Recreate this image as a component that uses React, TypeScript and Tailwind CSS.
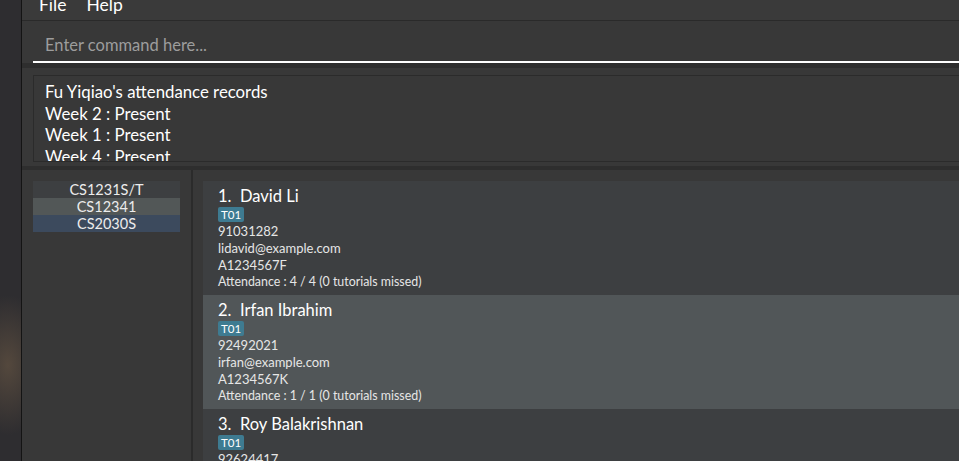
const modules = [
  { code: 'CS1231S/T', bg: 'bg-[#3d3f41]' },
  { code: 'CS12341', bg: 'bg-[#525757]' },
  { code: 'CS2030S', bg: 'bg-[#3c4a5d]' },
];

const people = [
  {
    name: 'David Li',
    phone: '91031282',
    email: 'lidavid@example.com',
    id: 'A1234567F',
    attendance: '4 / 4 (0 tutorials missed)',
  },
  {
    name: 'Irfan Ibrahim',
    phone: '92492021',
    email: 'irfan@example.com',
    id: 'A1234567K',
    attendance: '1 / 1 (0 tutorials missed)',
  },
  {
    name: 'Roy Balakrishnan',
    phone: '92624417',
    email: 'royb@example.com',
    id: 'A1234567R',
    attendance: '2 / 2 (0 tutorials missed)',
  },
];

function PersonCard({ index, person }: { index: number; person: (typeof people)[number] }) {
  const bg = index % 2 === 0 ? 'bg-[#3d3f41]' : 'bg-[#515658]';
  return (
    <div className={`${bg} h-[114px] shrink-0 pl-[15px] pt-[5px]`}>
      <div className="text-[16.5px] leading-[20px] text-white">
        {index + 1}.&nbsp;&nbsp;{person.name}
      </div>
      <div className="mt-[1px] flex">
        <span className="rounded-[2px] bg-[#3e7b91] px-[3px] text-[11.5px] leading-[15px] text-white">
          T01
        </span>
      </div>
      <div className="mt-[1px] text-[13px] leading-[17px] text-[#e6e6e6]">{person.phone}</div>
      <div className="text-[13px] leading-[17px] text-[#e6e6e6]">{person.email}</div>
      <div className="text-[13px] leading-[17px] text-[#e6e6e6]">{person.id}</div>
      <div className="text-[12.4px] leading-[16px] text-[#e6e6e6]">Attendance : {person.attendance}</div>
    </div>
  );
}

export default function App() {
  return (
    <div className="flex h-[461px] w-[959px] overflow-hidden font-['Lato',sans-serif]">
      <div className="w-[21px] shrink-0 bg-[#2e2d30] bg-[radial-gradient(ellipse_40px_70px_at_8px_365px,#54483d,#2e2d30)]" />
      <div className="w-[1px] shrink-0 bg-[#141414]" />
      <div className="flex min-w-0 flex-1 flex-col bg-[#383838]">
        <div className="flex h-[21px] shrink-0 items-end gap-[20px] border-b border-[#2a2a2a] bg-[#3a3a3a] pb-[7px] pl-[17px] text-[17.5px] leading-[16px] text-white">
          <span>File</span>
          <span>Help</span>
        </div>
        <div className="flex h-[42px] shrink-0 flex-col justify-end pl-[11px]">
          <div className="border-b-2 border-white pb-[6px] pl-[12px] text-[16.5px] leading-[20px] text-[#9d9d9d]">
            Enter command here...
          </div>
        </div>
        <div className="h-[5px] shrink-0 bg-[#2e2e2e]" />
        <div className="flex h-[98px] shrink-0 flex-col pl-[11px] pt-[7px]">
          <div className="h-[87px] overflow-hidden border-y border-l border-[#2b2b2b] pl-[11px] pt-[5px] text-[16.8px] leading-[21.5px] text-white">
            <div>Fu Yiqiao's attendance records</div>
            <div>Week 2 : Present</div>
            <div>Week 1 : Present</div>
            <div>Week 4 : Present</div>
          </div>
        </div>
        <div className="h-[4px] shrink-0 bg-[#2e2e2e]" />
        <div className="flex min-h-0 flex-1">
          <div className="w-[169px] shrink-0 px-[11px] pt-[11px]">
            {modules.map((m) => (
              <div
                key={m.code}
                className={`${m.bg} h-[17px] text-center text-[14.5px] leading-[17px] text-[#ececec]`}
              >
                {m.code}
              </div>
            ))}
          </div>
          <div className="w-[2px] shrink-0 bg-[#2b2b2b]" />
          <div className="flex min-w-0 flex-1 flex-col overflow-hidden pl-[10px] pt-[11px]">
            {people.map((p, i) => (
              <PersonCard key={p.name} index={i} person={p} />
            ))}
          </div>
        </div>
      </div>
    </div>
  );
}
